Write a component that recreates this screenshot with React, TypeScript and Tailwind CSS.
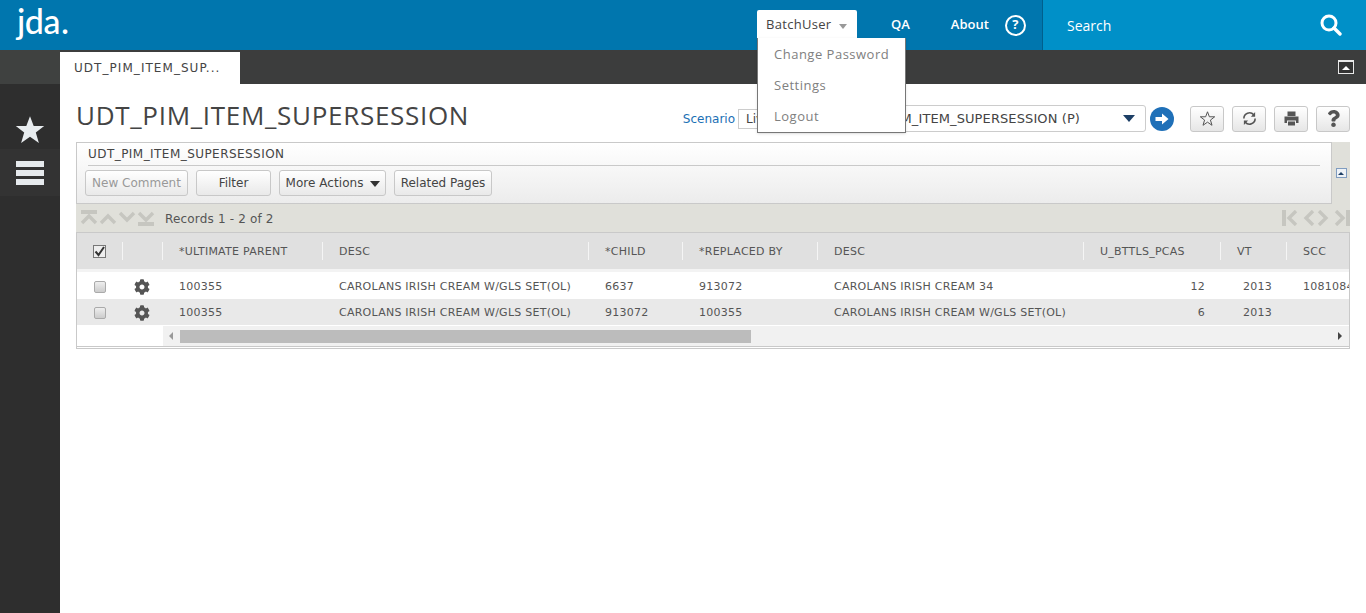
import { FaCog, FaQuestion } from "react-icons/fa";

const COLS = "grid grid-cols-[45px_40px_160px_266px_94px_135px_266px_137px_66px_63px]";

const HEADERS = ["", "", "*ULTIMATE PARENT", "DESC", "*CHILD", "*REPLACED BY", "DESC", "U_BTTLS_PCAS", "VT", "SCC"];

const ROWS = [
  { parent: "100355", desc: "CAROLANS IRISH CREAM W/GLS SET(OL)", child: "6637", by: "913072", desc2: "CAROLANS IRISH CREAM 34", pcas: "12", vt: "2013", scc: "1081084" },
  { parent: "100355", desc: "CAROLANS IRISH CREAM W/GLS SET(OL)", child: "913072", by: "100355", desc2: "CAROLANS IRISH CREAM W/GLS SET(OL)", pcas: "6", vt: "2013", scc: "" },
];

const STAR = "12,1 15,9 23.5,9 16.7,14.2 19.2,22.6 12,17.6 4.8,22.6 7.3,14.2 0.5,9 9,9";

function Chevron({ up, bar }: { up: boolean; bar?: boolean }) {
  return (
    <svg width="18" height="16" viewBox="0 0 18 16" className="text-[#c6c6c0]">
      {bar && <rect x="1" y={up ? 0 : 12} width="16" height="4" fill="currentColor" />}
      <path
        d={up ? "M2 13 L9 6 L16 13" : "M2 3 L9 10 L16 3"}
        fill="none"
        stroke="currentColor"
        strokeWidth="3.4"
      />
    </svg>
  );
}

function Pager({ left, bar }: { left: boolean; bar?: boolean }) {
  return (
    <svg width="17" height="16" viewBox="0 0 17 16" className="text-[#c6c6c0]">
      {bar && <rect x={left ? 0 : 13} y="0" width="4" height="16" fill="currentColor" />}
      <path
        d={left ? "M14 1 L7 8 L14 15" : "M3 1 L10 8 L3 15"}
        fill="none"
        stroke="currentColor"
        strokeWidth="3.4"
      />
    </svg>
  );
}

function ToolButton({ children, className }: { children: React.ReactNode; className: string }) {
  return (
    <button
      type="button"
      className={`flex h-[26px] items-center justify-center whitespace-nowrap rounded-[3px] border border-[#c8c8c8] bg-gradient-to-b from-white to-[#e9e9e9] text-[12px] ${className}`}
    >
      {children}
    </button>
  );
}

function IconButton({ children }: { children: React.ReactNode }) {
  return (
    <button
      type="button"
      className="flex h-[26px] w-[34px] items-center justify-center rounded-[3px] border border-[#c8c8c8] bg-gradient-to-b from-white to-[#e6e6e6] text-[#555]"
    >
      {children}
    </button>
  );
}

export default function App() {
  return (
    <div className="relative flex h-[613px] w-[1366px] flex-col overflow-hidden bg-white font-['DejaVu_Sans',sans-serif] text-[#444]">
      {/* top bar */}
      <header className="flex h-[50px] shrink-0 bg-[#0076ae]">
        <div className="w-[757px] pl-[17px]">
          <span className="block font-['Lato',sans-serif] text-[34px] font-medium leading-[41px] tracking-[-0.5px] text-white">
            jda<span className="ml-[1px]">.</span>
          </span>
        </div>
        <div className="flex w-[100px] items-start font-['Open_Sans',sans-serif]">
          <div className="mt-[10px] flex h-[29px] w-[100px] items-center rounded-t-[2px] bg-white pl-[9px] text-[13px] tracking-[0.3px] text-[#444]">
            BatchUser
            <span className="ml-[8px] mt-[3px] border-x-[4px] border-t-[5px] border-x-transparent border-t-[#999]" />
          </div>
        </div>
        <div className="flex w-[185px] items-center pl-[34px] font-['Open_Sans',sans-serif] text-[13px] font-semibold text-white">
          <span>QA</span>
          <span className="ml-[41px]">About</span>
          <span className="ml-[16px] flex h-[21px] w-[21px] items-center justify-center rounded-full border-2 border-white text-[13px] font-bold">?</span>
        </div>
        <div className="flex flex-1 items-center justify-between border-l border-[#005f8d] bg-[#0090c8] pl-[24px] pr-[24px] font-['Open_Sans',sans-serif] text-[14px] text-white">
          <span>Search</span>
          <svg width="22" height="22" viewBox="0 0 22 22" fill="none" stroke="white">
            <circle cx="9" cy="9" r="7" strokeWidth="3" />
            <path d="M14 14 L20 20" strokeWidth="3.4" strokeLinecap="round" />
          </svg>
        </div>
      </header>

      {/* tab strip */}
      <div className="flex h-[34px] shrink-0 items-end bg-[#3c3d3d]">
        <div className="h-full w-[60px] bg-[#3f4140]" />
        <div className="flex h-[32px] w-[180px] items-center bg-white pl-[14px] text-[12px] tracking-[1.05px] text-[#444]">UDT_PIM_ITEM_SUP...</div>
        <div className="flex h-full flex-1 items-center justify-end pr-[12px]">
          <span className="flex h-[14px] w-[16px] items-center justify-center border border-t-2 border-[#e8e8e8] bg-[#333]">
            <span className="border-x-[4px] border-b-[4px] border-x-transparent border-b-white" />
          </span>
        </div>
      </div>

      <div className="flex flex-1">
        {/* side rail */}
        <aside className="w-[60px] shrink-0 bg-[#2e2e2e]">
          <div className="flex h-[65px] items-end justify-center pb-[5px]">
            <svg width="30" height="29" viewBox="0 0 24 23.5" className="text-[#e8ecef]">
              <polygon points={STAR} fill="currentColor" />
            </svg>
          </div>
          <div className="flex h-[47px] flex-col items-center justify-center gap-[3px] bg-[#333]">
            <span className="h-[6px] w-[28px] bg-[#e6eaed]" />
            <span className="h-[6px] w-[28px] bg-[#e6eaed]" />
            <span className="h-[6px] w-[28px] bg-[#e6eaed]" />
          </div>
        </aside>

        <main className="flex-1 pl-[16px] pr-[17px]">
          {/* title row */}
          <div className="flex h-[58px] items-start justify-between">
            <h1 className="mt-[13px] font-['Open_Sans',sans-serif] text-[26px] leading-[36px] tracking-[0.7px] text-[#444]">UDT_PIM_ITEM_SUPERSESSION</h1>
            <div className="mt-[21px] flex items-center">
              <span className="text-[12px] text-[#1b6fb5]">Scenario</span>
              <div className="ml-[3px] flex h-[20px] w-[61px] items-center border border-[#ccc] pl-[7px] text-[12px]">Live</div>
              <div className="ml-[2px] flex h-[27px] w-[345px] items-center justify-end rounded-[3px] border border-[#ccc] pr-[10px] text-[13px] tracking-[0.1px]">
                <span>UDT_PIM_ITEM_SUPERSESSION (P)</span>
                <span className="ml-[43px] border-x-[6px] border-t-[7px] border-x-transparent border-t-[#1d3f66]" />
              </div>
              <svg width="24" height="24" viewBox="0 0 24 24" className="ml-[4px]">
                <circle cx="12" cy="12" r="12" fill="#1f70b8" />
                <path d="M5.5 10 H12 V6.5 L18.5 12 L12 17.5 V14 H5.5 Z" fill="white" />
              </svg>
              <div className="ml-[16px] flex gap-[8px]">
                <IconButton>
                  <svg width="15" height="15" viewBox="0 0 24 23.5" fill="none" stroke="currentColor" strokeWidth="1.6">
                    <polygon points={STAR} />
                  </svg>
                </IconButton>
                <IconButton>
                  <svg width="15" height="15" viewBox="0 0 16 16" fill="none" stroke="currentColor" strokeWidth="1.7">
                    <path d="M2 8 A6 6 0 0 1 12.5 4" />
                    <path d="M14 8 A6 6 0 0 1 3.5 12" />
                    <path d="M14 1 V6 H9.5 Z" fill="currentColor" stroke="none" />
                    <path d="M2 15 V10 H6.5 Z" fill="currentColor" stroke="none" />
                  </svg>
                </IconButton>
                <IconButton>
                  <svg width="15" height="15" viewBox="0 0 15 15" fill="currentColor">
                    <path d="M3.5 0.5 H11.5 V5 H3.5 Z M0.5 5.5 H14.5 V12 H12 V9.5 H3 V12 H0.5 Z M4 10.5 H11 V14.5 H4 Z" />
                  </svg>
                </IconButton>
                <IconButton><FaQuestion className="text-[17px]" /></IconButton>
              </div>
            </div>
          </div>

          {/* actions panel */}
          <div className="flex bg-[#e0e0da]">
            <div className="h-[62px] w-[1256px] border border-[#c9c9c9] bg-gradient-to-b from-white to-[#ececec]">
              <div className="mx-[11px] flex h-[23px] items-center border-b border-[#c9c9c9] text-[12px] tracking-[0.45px] text-[#444]">
                UDT_PIM_ITEM_SUPERSESSION
              </div>
              <div className="ml-[8px] mt-[4px] flex gap-[8px]">
                <ToolButton className="w-[103px] text-[#999]">New Comment</ToolButton>
                <ToolButton className="w-[75px] text-[#444]">Filter</ToolButton>
                <ToolButton className="w-[107px] tracking-[0.05px] text-[#444]">
                  More Actions
                  <span className="ml-[6px] mt-[2px] border-x-[5px] border-t-[6px] border-x-transparent border-t-[#333]" />
                </ToolButton>
                <ToolButton className="w-[98px] text-[#444]">Related Pages</ToolButton>
              </div>
            </div>
            <div className="flex flex-1 items-center justify-center">
              <span className="flex h-[10px] w-[11px] items-center justify-center border border-[#7f9cc0] bg-[#eef2f7]">
                <span className="border-x-[3px] border-b-[3px] border-x-transparent border-b-[#1d3f66]" />
              </span>
            </div>
          </div>

          {/* records bar */}
          <div className="flex h-[29px] items-center justify-between border-b border-[#c9c9c9] bg-[#e0e0da] pl-[4px] text-[12px] text-[#555]">
            <div className="flex items-center">
              <div className="flex gap-[1px]">
                <Chevron up bar />
                <Chevron up />
                <Chevron up={false} />
                <Chevron up={false} bar />
              </div>
              <span className="ml-[10px] mt-[1px] tracking-[0.17px]">Records 1 - 2 of 2</span>
            </div>
            <div className="flex">
              <Pager left bar />
              <Pager left />
              <Pager left={false} />
              <Pager left={false} bar />
            </div>
          </div>

          {/* grid */}
          <div className="h-[116px] overflow-hidden border-x border-b-[3px] border-double border-x-[#c9c9c9] border-b-[#c9c9c9] text-[11px] tracking-[0.25px] text-[#555]">
            <div className={`${COLS} h-[36px] items-center bg-[#e0e0e0]`}>
              {HEADERS.map((h, i) => (
                <div key={i} className={`flex h-[18px] items-center overflow-hidden whitespace-nowrap ${i > 0 ? "border-l border-[#f5f5f5] pl-[16px] pt-[3px]" : "justify-center"}`}>
                  {i === 0 ? (
                    <span className="flex h-[13px] w-[13px] items-center justify-center border border-[#777] bg-[#eee]">
                      <svg width="11" height="11" viewBox="0 0 11 11">
                        <path d="M1.5 5.5 L4.5 9 L10 1" fill="none" stroke="#333" strokeWidth="2" />
                      </svg>
                    </span>
                  ) : (
                    h
                  )}
                </div>
              ))}
            </div>
            <div className="h-[5px] border-t-[3px] border-t-[#f3f3f3]" />
            {ROWS.map((r, i) => (
              <div key={i} className={`${COLS} items-center whitespace-nowrap ${i % 2 ? "h-[26px] bg-[#e9e9e9] pt-[2px]" : "h-[25px] bg-white pt-[1px]"}`}>
                <div className="flex justify-center">
                  <span className="h-[12px] w-[12px] rounded-[2px] border border-[#aaa] bg-gradient-to-b from-[#eee] to-[#ccc]" />
                </div>
                <div className="flex justify-center"><FaCog className="text-[16px] text-[#555]" /></div>
                <div className="pl-[17px]">{r.parent}</div>
                <div className="pl-[17px]">{r.desc}</div>
                <div className="pl-[17px]">{r.child}</div>
                <div className="pl-[17px]">{r.by}</div>
                <div className="pl-[17px]">{r.desc2}</div>
                <div className="pr-[15px] text-right">{r.pcas}</div>
                <div className="pl-[23px]">{r.vt}</div>
                <div className="overflow-hidden pl-[17px]">{r.scc}</div>
              </div>
            ))}
            <div className="mt-[1px] flex h-[20px] items-center pl-[86px]">
              <div className="flex h-full flex-1 items-center bg-[#f1f1f1]">
                <span className="ml-[6px] border-y-[4px] border-r-[4px] border-y-transparent border-r-[#999]" />
                <div className="ml-[7px] h-[13px] w-[571px] bg-[#bcbcbc]" />
                <span className="ml-auto mr-[7px] border-y-[4px] border-l-[4px] border-y-transparent border-l-[#444]" />
              </div>
            </div>
          </div>
        </main>
      </div>

      {/* user menu */}
      <div className="absolute left-[757px] top-[38px] w-[149px] border border-[#777] border-t-0 bg-white pb-[1px] font-['Open_Sans',sans-serif] text-[13px] tracking-[0.5px] text-[#808080] shadow-sm">
        <div className="flex h-[31px] items-center pl-[16px] pt-[2px]">Change Password</div>
        <div className="flex h-[31px] items-center pl-[16px] pt-[2px]">Settings</div>
        <div className="flex h-[31px] items-center pl-[16px] pt-[2px]">Logout</div>
      </div>
    </div>
  );
}
